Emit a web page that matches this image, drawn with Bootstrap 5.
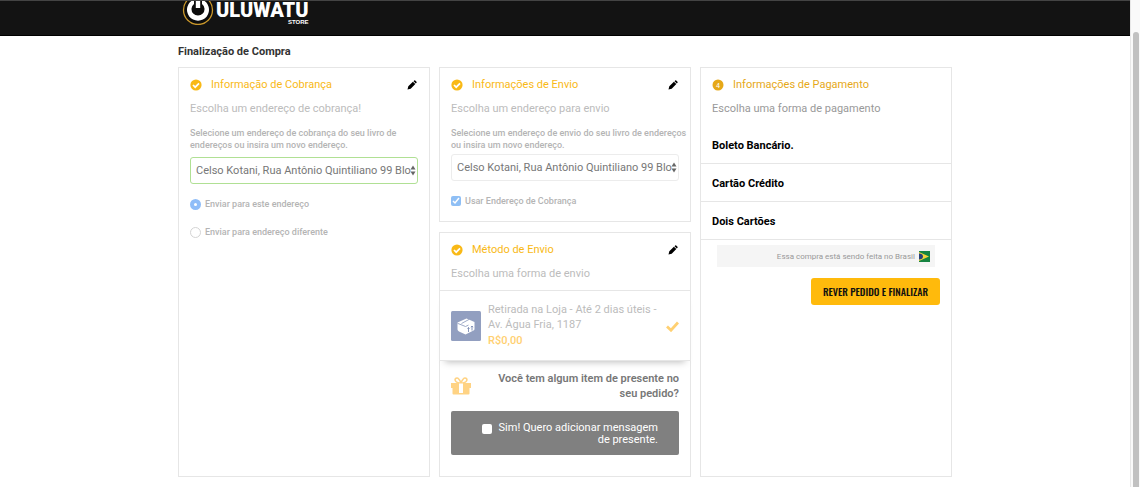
<!DOCTYPE html>
<html lang="pt-BR">
<head>
<meta charset="utf-8">
<meta name="viewport" content="width=device-width, initial-scale=1">
<title>Uluwatu Store - Finalização de Compra</title>
<link href="https://cdn.jsdelivr.net/npm/bootstrap@5.3.0/dist/css/bootstrap.min.css" rel="stylesheet">
<style>
  :root { --gold: #f9b916; --muted: #bcbcbc; }
  html { overflow: hidden; }
  body { font: 11px/15px Roboto, sans-serif; color: #333; background: #fff; }
  .page-main { min-width: 0; }
  .wrap { max-width: 774px; }
  .topbar { background: #131313; border-top: 1px solid #444; border-bottom: 1px solid #000; height: 36px; overflow: hidden; }
  .brand { color: #fff; text-decoration: none; gap: 2px; padding-left: 4px; }
  .brand-mark { width: 32px; height: 32px; margin-top: -8px; }
  .brand-name { font: 900 20px/18px Roboto, sans-serif; }
  .brand-sub { font: 700 6px/7px "Liberation Sans", sans-serif; }
  .page-title { font-size: 11px; line-height: 16px; font-weight: 700; margin: 8px 0 7px; }
  .steps { display: grid; grid-template-columns: repeat(3, minmax(0, 1fr)); gap: 9px; }
  .panel { border: 1px solid #e6e6e6; background: #fff; }
  .panel-body { padding: 9px 11px 0; }
  .step-title { font-size: 11px; line-height: 16px; font-weight: 400; color: var(--gold); margin: 0; }
  .step-title svg { width: 12px; height: 12px; margin-right: 9px; }
  .step-title.current { color: #e6a817; }
  .edit { border: 0; background: none; padding: 0; line-height: 0; }
  .edit svg { width: 12px; height: 12px; }
  .hint { color: var(--muted); line-height: 16px; margin: 8px 0; }
  .hint.current { color: #999; }
  .tiny { font-size: 9px; line-height: 12px; font-weight: 500; color: #b4b4b4; }
  .lead-in { padding-top: 2px; margin-right: -10px; }
  .select-box { position: relative; margin-top: 6px; }
  .select-box.close-up { margin-top: 3px; }
  .select-box select { appearance: none; width: 100%; height: 27px; padding: 0 5px; border: 1px solid #ececec; border-radius: 3px; background: #fff; color: #777; font-size: 11px; overflow: hidden; }
  .select-box.valid select { border-color: #b0e094; }
  .select-box svg { position: absolute; right: 2px; top: 8px; width: 6px; height: 11px; pointer-events: none; }
  .choice { gap: 4px; height: 16px; margin: 12px 0; }
  .choice input { appearance: none; width: 11px; height: 11px; margin: 0; border: 1px solid #d4d4d4; background: #fff; }
  .choice input[type=radio] { border-radius: 50%; }
  .choice input[type=radio]:checked { border: 4px solid #8fbdf8; }
  .choice input[type=checkbox] { width: 10px; height: 10px; border-radius: 2px; }
  .choice input[type=checkbox]:checked { border: 0; background: #8fbff5 url("data:image/svg+xml,%3Csvg xmlns='http://www.w3.org/2000/svg' viewBox='0 0 10 10'%3E%3Cpath d='M2 5l2 2 4-5' fill='none' stroke='white' stroke-width='1.5'/%3E%3C/svg%3E"); }
  .shipping { margin-top: 10px; }
  .method { border: 1px solid #e6e6e6; margin: 0 -1px; padding: 11px 11px 10px; box-shadow: 0 7px 7px -6px #bbb; gap: 7px; color: var(--muted); }
  .parcel { width: 30px; height: 30px; flex: none; }
  .price { color: #ffd071; font-weight: 500; line-height: 18px; }
  .gift-note { margin: 10px 11px; color: #777; font-weight: 600; }
  .gift-note svg { width: 20px; height: 18px; flex: none; }
  .gift-note p { width: 190px; }
  .gift-box { margin: 0 11px 21px; padding: 11px 21px 9px; background: #808080; border-radius: 2px; color: #fff; line-height: 12px; gap: 4px; }
  .gift-box input { appearance: none; flex: none; width: 10px; height: 10px; margin: 2px 0 0; background: #fff; border-radius: 2px; }
  .gift-box label { width: 162px; }
  .pay-list { padding-top: 1px; }
  .pay { display: block; width: 100%; border: 0; border-bottom: 1px solid #e6e6e6; background: #fff; text-align: left; color: #000; font-weight: 700; padding: 12px 11px 10px; height: 38px; line-height: 15px; }
  .country { margin: 5px 16px 11px; padding: 0 5px; height: 22px; background: #f5f5f5; color: #999; font-size: 8px; gap: 4px; }
  .country svg { width: 11px; height: 11px; }
  .finish { border: 0; border-radius: 3px; background: #ffba0c; color: #111; width: 129px; height: 27px; margin-right: 11px; padding: 0; font: 500 10px/27px Oswald, "Roboto Condensed", "Liberation Sans Narrow", sans-serif; }
  .scroll-rail { width: 10px; flex: none; background: #fafafa; border-left: 1px solid #e8e8e8; padding: 32px 1px 0 2px; }
  .scroll-thumb { background: #c1c1c1; border-radius: 3px 3px 0 0; width: 6px; }
</style>
</head>
<body>
<svg class="d-none" aria-hidden="true">
  <symbol id="done" viewBox="0 0 12 12"><circle cx="6" cy="6" r="5.600" fill="currentColor"/><path d="M3 6l2.200 2.200L9 4.400" fill="none" stroke="#fff" stroke-width="1.700"/></symbol>
  <symbol id="pencil" viewBox="0 0 12 12"><path d="M1.500 10.500l.8-3.200 4.600-4.600 2.400 2.400-4.600 4.600zM7.500 2.200l.7-.7q.5-.4 1 0l1.300 1.300q.4.500 0 1l-.7.700z" fill="#000"/></symbol>
  <symbol id="arrows" viewBox="0 0 6 11"><path d="M.5 4.500L3 .5l2.500 4zM.5 6.500h5L3 10.500z" fill="#666"/></symbol>
</svg>
<div class="d-flex min-vh-100">
  <div class="page-main flex-grow-1">
    <header class="topbar">
      <div class="wrap mx-auto">
        <a class="brand d-inline-flex align-items-start" href="#">
          <svg class="brand-mark" viewBox="0 0 32 32" aria-hidden="true"><circle cx="16" cy="17" r="14.500" fill="#0c0c0c" stroke="#c9972b" stroke-width="1.300"/><path d="M12 6.500A11 11 0 1 0 20 6.500V11a6.500 6.500 0 1 1-8 0z" fill="#fff"/><path d="M13.800 3h4.400v12h-4.400z" fill="#fff"/></svg>
          <span class="d-flex flex-column align-items-end"><span class="brand-name">ULUWATU</span><span class="brand-sub">STORE</span></span>
        </a>
      </div>
    </header>
    <main class="wrap mx-auto">
      <h1 class="page-title">Finalização de Compra</h1>
      <div class="steps">
        <section class="panel">
          <div class="panel-body">
            <div class="d-flex justify-content-between align-items-center">
              <h2 class="step-title d-flex align-items-center"><svg><use href="#done"/></svg>Informação de Cobrança</h2>
              <button class="edit" type="button" aria-label="Editar"><svg><use href="#pencil"/></svg></button>
            </div>
            <p class="hint">Escolha um endereço de cobrança!</p>
            <label class="tiny lead-in d-block" for="bill">Selecione um endereço de cobrança do seu livro de endereços ou insira um novo endereço.</label>
            <div class="select-box valid"><select id="bill"><option>Celso Kotani, Rua Antônio Quintiliano 99 Blo</option></select><svg><use href="#arrows"/></svg></div>
            <div class="choice d-flex align-items-center"><input type="radio" name="send" id="same" checked><label class="tiny" for="same">Enviar para este endereço</label></div>
            <div class="choice d-flex align-items-center"><input type="radio" name="send" id="other"><label class="tiny" for="other">Enviar para endereço diferente</label></div>
          </div>
        </section>
        <div class="d-flex flex-column">
          <section class="panel">
            <div class="panel-body">
              <div class="d-flex justify-content-between align-items-center">
                <h2 class="step-title d-flex align-items-center"><svg><use href="#done"/></svg>Informações de Envio</h2>
                <button class="edit" type="button" aria-label="Editar"><svg><use href="#pencil"/></svg></button>
              </div>
              <p class="hint">Escolha um endereço para envio</p>
              <label class="tiny lead-in d-block" for="ship">Selecione um endereço de envio do seu livro de endereços ou insira um novo endereço.</label>
              <div class="select-box close-up"><select id="ship"><option>Celso Kotani, Rua Antônio Quintiliano 99 Blo</option></select><svg><use href="#arrows"/></svg></div>
              <div class="choice d-flex align-items-center"><input type="checkbox" id="use" checked><label class="tiny" for="use">Usar Endereço de Cobrança</label></div>
            </div>
          </section>
          <section class="panel shipping flex-grow-1">
            <div class="panel-body">
              <div class="d-flex justify-content-between align-items-center">
                <h2 class="step-title d-flex align-items-center"><svg><use href="#done"/></svg>Método de Envio</h2>
                <button class="edit" type="button" aria-label="Editar"><svg><use href="#pencil"/></svg></button>
              </div>
              <p class="hint">Escolha uma forma de envio</p>
            </div>
            <div class="method d-flex align-items-center">
              <svg class="parcel" viewBox="0 0 30 30" aria-hidden="true"><rect width="30" height="30" rx="1.500" fill="#929fc0"/><path d="M6.500 11.500L15.500 7.500l8 3.500v7q0 1-1 1.500L14.500 23.500 8 20.500q-1.500-.8-1.500-2z" fill="#fff"/><path d="M6.500 12.300l8 3.200 3-1.400M10.500 12.500l8-4.300" fill="none" stroke="#929fc0" stroke-width=".9"/><path d="M17.500 21v-4.500m-1 1.200l1-1.200 1 1.200M21 19.500V15m-1 1.200l1-1.200 1 1.200" fill="none" stroke="#7b8ab2" stroke-width=".9"/></svg>
              <div class="flex-grow-1">Retirada na Loja - Até 2 dias úteis - Av. Água Fria, 1187<div class="price">R$0,00</div></div>
              <svg width="13" height="11" class="flex-shrink-0" viewBox="0 0 13 11" aria-hidden="true"><path d="M1 5.500l4 3.700L12 1.500" fill="none" stroke="#ffd071" stroke-width="2.800"/></svg>
            </div>
            <div class="gift-note d-flex justify-content-between align-items-center">
              <svg viewBox="0 0 20 18" aria-hidden="true"><path d="M0 6h20v5h-1.500v5.500q0 1-1 1h-15q-1 0-1-1V11H0z" fill="#ffd384"/><path d="M10 6C3 6 3 1 6 1q2 0 4 5 2-5 4-5c3 0 3 5-4 5z" fill="none" stroke="#ffd384" stroke-width="1.600"/><path d="M8 6.500h4V16H8z" fill="#fff"/></svg>
              <p class="mb-0 text-end">Você tem algum item de presente no seu pedido?</p>
            </div>
            <div class="gift-box d-flex justify-content-end"><input type="checkbox" id="gift"><label class="text-end" for="gift">Sim! Quero adicionar mensagem de presente.</label></div>
          </section>
        </div>
        <section class="panel">
          <div class="panel-body">
            <h2 class="step-title current d-flex align-items-center"><svg viewBox="0 0 12 12"><circle cx="6" cy="6" r="5.500" fill="currentColor"/><text x="6" y="8.500" text-anchor="middle" font-size="7" fill="#fff">4</text></svg>Informações de Pagamento</h2>
            <p class="hint current">Escolha uma forma de pagamento</p>
          </div>
          <div class="pay-list">
            <button class="pay" type="button">Boleto Bancário.</button>
            <button class="pay" type="button">Cartão Crédito</button>
            <button class="pay" type="button">Dois Cartões</button>
          </div>
          <div class="country d-flex align-items-center justify-content-end">Essa compra está sendo feita no Brasil<svg viewBox="0 0 11 11" aria-hidden="true"><path fill="#168442" d="M0 0h11v11H0z"/><path d="M0 1l10 4.500L0 10z" fill="#f4d33c"/><path d="M0 2.500q4 0 4 3t-4 3z" fill="#27417c"/></svg></div>
          <div class="text-end"><button class="finish" type="button">REVER PEDIDO E FINALIZAR</button></div>
        </section>
      </div>
    </main>
  </div>
  <div class="scroll-rail d-flex" aria-hidden="true"><div class="scroll-thumb"></div></div>
</div>
<script src="https://cdn.jsdelivr.net/npm/bootstrap@5.3.0/dist/js/bootstrap.bundle.min.js"></script>
</body>
</html>
